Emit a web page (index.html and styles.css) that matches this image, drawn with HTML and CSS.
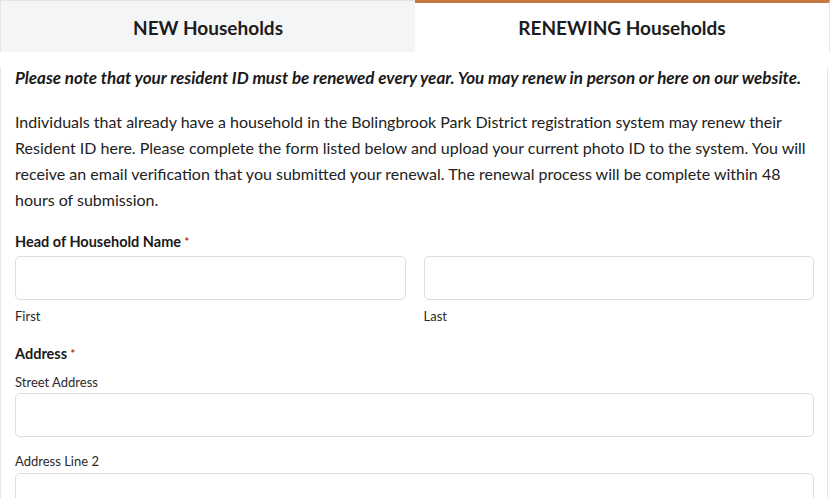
FILE: index.html
```html
<!DOCTYPE html>
<html lang="en">
<head>
<meta charset="utf-8">
<title>Resident ID Renewal</title>
<link rel="stylesheet" href="styles.css">
</head>
<body>
<div class="tabs">
  <div class="tab">NEW Households</div>
  <div class="tab tab-active">RENEWING Households</div>
</div>
<div class="panel">
  <p class="note">Please note that your resident ID must be renewed every year. You may renew in person or here on our website.</p>
  <p class="intro">Individuals that already have a household in the Bolingbrook Park District registration system may renew their Resident ID here. Please complete the form listed below and upload your current photo ID to the system. You will receive an email verification that you submitted your renewal. The renewal process will be complete within 48 hours of submission.</p>

  <div class="field">
    <div class="field-label">Head of Household Name <span class="req">*</span></div>
    <div class="name-row">
      <div class="sub">
        <input class="input" type="text">
        <label class="sub-label sub-label-below">First</label>
      </div>
      <div class="sub">
        <input class="input" type="text">
        <label class="sub-label sub-label-below">Last</label>
      </div>
    </div>
  </div>

  <div class="field field-address">
    <div class="field-label">Address <span class="req">*</span></div>
    <label class="sub-label sub-label-above">Street Address</label>
    <input class="input" type="text">
    <label class="sub-label sub-label-above line2">Address Line 2</label>
    <input class="input" type="text">
  </div>
</div>
</body>
</html>
```
FILE: styles.css
```css
html, body {
  margin: 0;
  padding: 0;
  background: #fff;
}
body {
  font-family: Lato, "Open Sans", sans-serif;
  color: #222;
  width: 830px;
  overflow: hidden;
}
.tabs {
  display: flex;
  height: 52px;
}
.tab {
  flex: 1 1 0;
  display: flex;
  align-items: center;
  justify-content: center;
  font-size: 19px;
  font-weight: 700;
  color: #1c1c1c;
  background: #f4f5f7;
  border-top: 1px solid #e4e4e6;
  border-left: 1px solid #e6e6e6;
  padding-top: 2px;
  box-sizing: border-box;
}
.tab-active {
  background: #fff;
  border-top: 3px solid #c8773f;
  border-left: none;
  border-right: 1px solid #e6e6e6;
  padding-top: 0;
}
.panel {
  border-left: 1px solid #e6e6e6;
  border-right: 1px solid #e6e6e6;
  padding: 0 13px 0 14px;
  box-sizing: border-box;
  width: 828px;
}
.note {
  margin: 15px 0 0;
  font-size: 17px;
  line-height: 22px;
  font-weight: 700;
  font-style: italic;
  color: #1a1a1a;
  white-space: nowrap;
}
.intro {
  margin: 20px 0 0;
  font-size: 16px;
  line-height: 26px;
  color: #222;
}
.field {
  margin-top: 20px;
}
.field-address {
  margin-top: 20px;
}
.field-label {
  font-size: 14.5px;
  line-height: 18px;
  font-weight: 700;
  color: #1a1a1a;
}
.req {
  color: #c02b0a;
  font-size: 11px;
  vertical-align: 1px;
}
.name-row {
  display: grid;
  grid-template-columns: 1fr 1fr;
  column-gap: 18px;
  margin-top: 5px;
}
.sub {
  display: flex;
  flex-direction: column;
}
.input {
  display: block;
  width: 100%;
  height: 44px;
  box-sizing: border-box;
  border: 1px solid #dedede;
  border-radius: 5px;
  background: #fff;
  margin: 0;
  padding: 0 10px;
  font: inherit;
}
.sub-label {
  display: block;
  font-size: 13px;
  line-height: 17px;
  color: #2a2a2a;
}
.sub-label-below {
  margin-top: 8px;
}
.sub-label-above {
  margin-top: 11px;
  margin-bottom: 2px;
}
.line2 {
  margin-top: 16px;
  margin-bottom: 3px;
}
```
